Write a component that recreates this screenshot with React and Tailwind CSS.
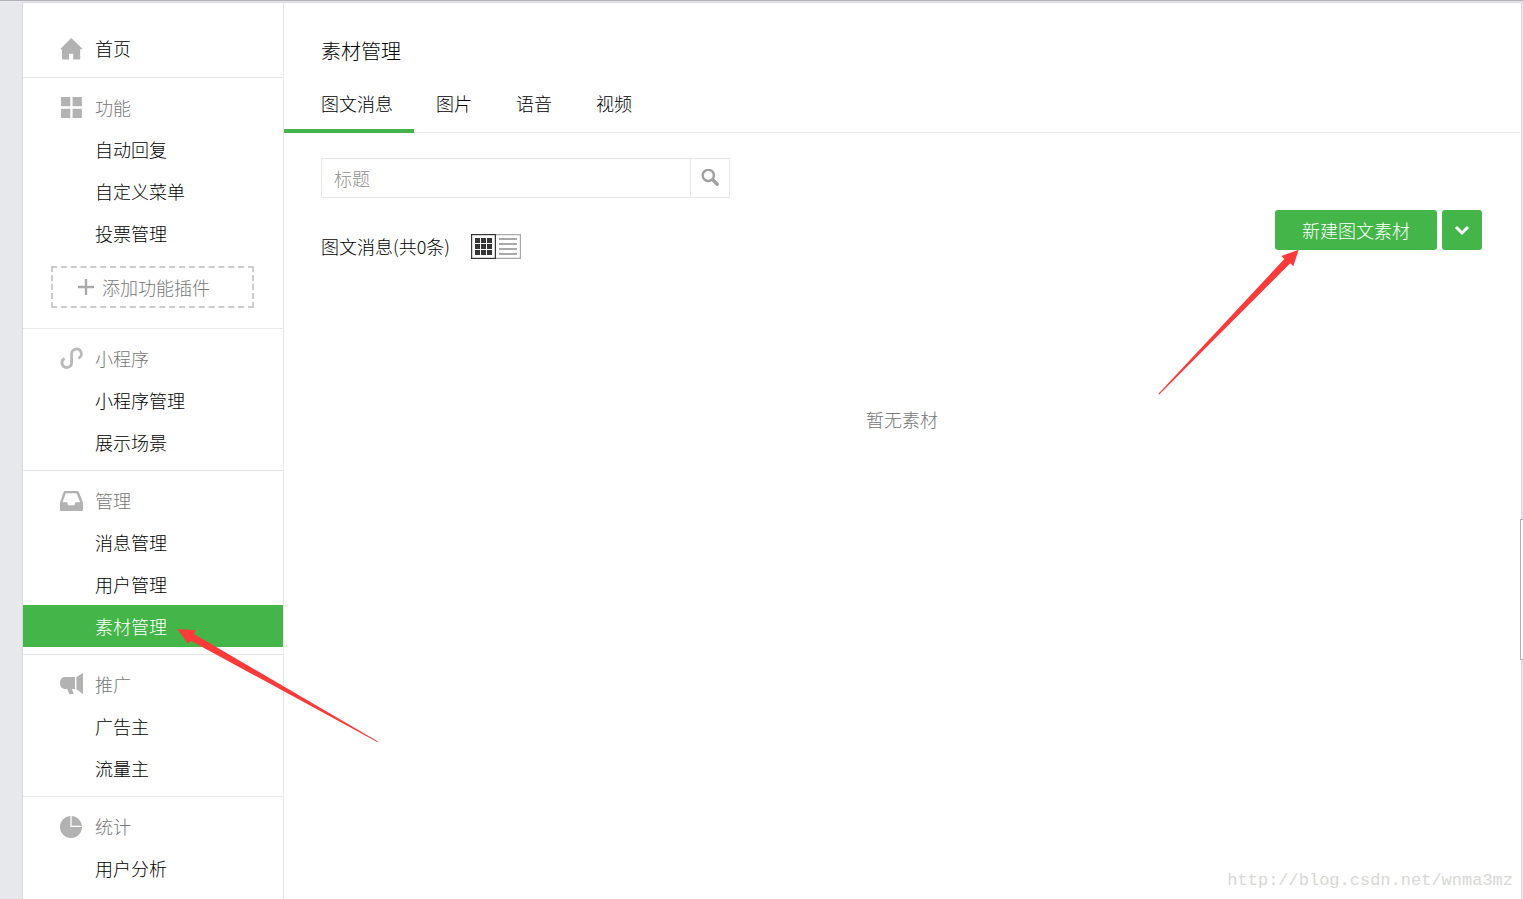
import React from 'react';
import clsx from 'clsx';

const HomeIcon = () => (
  <svg viewBox="0 0 24 24" className="w-6 h-6 fill-[#b2b2b2]" aria-hidden="true">
    <path d="M12.3 2 1 13.2h2V22.400q0 1 1 1h6v-5.600h4.200v5.600h6q1 0 1-1v-9.200h2.600z" />
  </svg>
);

const GridIcon = () => (
  <svg viewBox="0 0 24 24" className="w-6 h-6 fill-[#b2b2b2]" aria-hidden="true">
    <path d="M2 2h9.3v9.3H2zM13.6 2h9.3v9.3h-9.3zM2 13.7h9.3V23H2zM13.6 13.7h9.3V23h-9.3z" />
  </svg>
);

const MiniAppIcon = () => (
  <svg viewBox="0 0 24 24" className="w-6 h-6 fill-none stroke-[#b9b9b9]" strokeWidth="2.8" aria-hidden="true">
    <path d="M5.6 12.4A4.800 4.800 0 1 0 12.600 16.800V8A4.900 4.900 0 1 1 19.400 12.400" />
  </svg>
);

const TrayIcon = () => (
  <svg viewBox="0 0 24 24" className="w-6 h-6 fill-[#b2b2b2]" aria-hidden="true">
    <path
      fillRule="evenodd"
      d="M5.8 3h12.6q1 0 1.4 1L24 14.5V22q0 1-1 1H2q-1 0-1-1v-7.5L4.6 4Q5 3 5.8 3zM6.8 5.2 3.5 14.2H8.2Q8.6 17.3 10 17.3h4.500q1.500 0 1.900-3.100h4.800L17.500 5.200z"
    />
  </svg>
);

const HornIcon = () => (
  <svg viewBox="0 0 24 24" className="w-6 h-6 fill-[#b2b2b2]" aria-hidden="true">
    <path d="M6.5 5H16v12h-3.2l2 5h-4.6L8.200 17H6Q1 16.600 1 10.800 1.200 5 6.500 5zM17.400 5 24 1v21.200L17.400 17z" />
  </svg>
);

const PieIcon = () => (
  <svg viewBox="0 0 24 24" className="w-6 h-6" aria-hidden="true">
    <circle cx="12" cy="13" r="11" fill="#b2b2b2" />
    <path d="M12 1v11.400h12" fill="none" stroke="#fff" strokeWidth="1.3" />
  </svg>
);

const SearchIcon = () => (
  <svg viewBox="0 0 18 18" className="w-[18px] h-[18px] fill-none stroke-[#a0a0a0]" aria-hidden="true">
    <circle cx="7.3" cy="6.4" r="5.6" strokeWidth="2.4" />
    <path d="m11.800 10.800 4.400 4.400" strokeWidth="3.400" strokeLinecap="round" />
  </svg>
);

const sections = [
  {
    title: '功能',
    icon: GridIcon,
    items: ['自动回复', '自定义菜单', '投票管理'],
    addable: true,
  },
  { title: '小程序', icon: MiniAppIcon, items: ['小程序管理', '展示场景'] },
  { title: '管理', icon: TrayIcon, items: ['消息管理', '用户管理', '素材管理'] },
  { title: '推广', icon: HornIcon, items: ['广告主', '流量主'] },
  { title: '统计', icon: PieIcon, items: ['用户分析'] },
];

const tabs = ['图文消息', '图片', '语音', '视频'];

const Sidebar = ({ active }) => (
  <aside className="w-[261px] shrink-0 border-r border-[#e7e7eb]">
    <a href="#home" className="flex items-center gap-3 pl-9 pt-6 pb-2 leading-[42px]">
      <HomeIcon />
      首页
    </a>
    {sections.map(({ title, icon: Icon, items, addable }) => (
      <section key={title} className="border-t border-[#e7e7eb] pt-2 pb-[7px]">
        <h2 className="flex items-center gap-3 pl-9 leading-[42px] text-[#777777]">
          <Icon />
          {title}
        </h2>
        <ul>
          {items.map((item) => (
            <li key={item} className="relative">
              <a
                href={`#${item}`}
                className={clsx(
                  'block pl-[72px] leading-[42px]',
                  item === active && 'bg-[#44b549] text-white'
                )}
              >
                {item}
              </a>
              {item === active && (
                <svg
                  viewBox="0 0 202 115"
                  className="absolute left-[154px] top-[23px] z-10 w-[202px] h-[115px] fill-[#fb3b3a] pointer-events-none"
                  aria-hidden="true"
                >
                  <path d="M.3 1 19 2.3 17 6 201 113.500 200.600 114.200 13.700 12.700 11 15.700z" />
                </svg>
              )}
            </li>
          ))}
        </ul>
        {addable && (
          <button
            type="button"
            className="mx-7 mt-3 mb-[13px] flex h-[42px] w-[203px] items-center gap-2 border-2 border-dashed border-[#cccccc] pl-[25px] text-[#777777]"
          >
            <svg viewBox="0 0 16 16" className="w-4 h-4 stroke-[#aaaaaa]" strokeWidth="2.4" aria-hidden="true">
              <path d="M8 0v16M0 8h16" />
            </svg>
            添加功能插件
          </button>
        )}
      </section>
    ))}
  </aside>
);

const Tabs = ({ active }) => (
  <nav className="mt-3 border-b border-[#e7e7eb]">
    <ul className="-mb-px flex">
      {tabs.map((tab) => (
        <li key={tab} className="group">
          <a
            href={`#${tab}`}
            className={clsx(
              'block border-b-4 px-[22px] py-0.5 leading-12 group-first:pl-[37px] group-first:pr-[21px]',
              tab === active ? 'border-[#44b549]' : 'border-transparent'
            )}
          >
            {tab}
          </a>
        </li>
      ))}
    </ul>
  </nav>
);

const SearchBox = () => (
  <form className="flex h-10 w-[409px] border border-[#e7e7eb]" role="search">
    <input
      type="text"
      aria-label="标题"
      placeholder="标题"
      className="min-w-0 flex-1 px-3 outline-none placeholder:text-[#8f8f8f]"
    />
    <button
      type="button"
      aria-label="搜索"
      className="flex w-[39px] items-center justify-center border-l border-[#e7e7eb]"
    >
      <SearchIcon />
    </button>
  </form>
);

const ViewToggle = () => (
  <div className="flex">
    <button type="button" aria-label="卡片视图">
      <svg viewBox="0 0 25 25" className="w-[25px] h-[25px]" aria-hidden="true">
        <rect x=".6" y=".6" width="23.8" height="23.8" fill="#fff" stroke="#353535" strokeWidth="1.2" />
        <path
          d="M4 4h5v5H4zM10 4h5v5h-5zM16 4h5v5h-5zM4 10h5v5H4zM10 10h5v5h-5zM16 10h5v5h-5zM4 16h5v5H4zM10 16h5v5h-5zM16 16h5v5h-5z"
          fill="#353535"
        />
      </svg>
    </button>
    <button type="button" aria-label="列表视图">
      <svg viewBox="0 0 25 25" className="w-[25px] h-[25px]" aria-hidden="true">
        <path d="M0 .6h24.400v23.800H0" fill="#fff" stroke="#a9a9a9" strokeWidth="1.2" />
        <path d="M3 5h18M3 10h18M3 15h18M3 20h18" stroke="#a9a9a9" strokeWidth="2" />
      </svg>
    </button>
  </div>
);

const CreateActions = () => (
  <div className="relative flex gap-[5px] text-white">
    <button type="button" className="h-10 w-[162px] rounded-[3px] bg-[#44b549]">
      新建图文素材
    </button>
    <button
      type="button"
      aria-label="更多"
      className="flex h-10 w-10 items-center justify-center rounded-[3px] bg-[#44b549]"
    >
      <svg viewBox="0 0 16 12" className="w-4 h-3 fill-none stroke-white" strokeWidth="3" aria-hidden="true">
        <path d="m2 3 6 6 6-6" />
      </svg>
    </button>
    <svg
      viewBox="0 0 142 146"
      className="absolute right-[182px] top-[39px] w-[142px] h-[146px] fill-[#fb3b3a] pointer-events-none"
      aria-hidden="true"
    >
      <path d="M140.7.7 123.3 7l3 3L.2 145l.8.7L132.3 14.3l3 3z" />
    </svg>
  </div>
);

const App = () => (
  <div className="relative flex min-h-screen flex-col overflow-hidden border-t border-[#b4b1b6] bg-[#e7e8ec] pl-[22px] pr-px font-['Noto_Sans_CJK_SC',sans-serif] text-[18px] font-light text-black">
    <div className="mt-px flex flex-1 border border-b-0 border-[#d9dadc] bg-white">
      <Sidebar active="素材管理" />
      <main className="flex-1 pr-px">
        <h1 className="pl-[37px] pt-[34px] text-xl font-light leading-7">素材管理</h1>
        <Tabs active="图文消息" />
        <div className="pl-[37px] pr-[38px] pt-[25px]">
          <SearchBox />
          <div className="mt-3 flex items-start justify-between">
            <div className="mt-6 flex items-center gap-[21px] leading-[23px]">
              <p>图文消息(共0条)</p>
              <ViewToggle />
            </div>
            <CreateActions />
          </div>
        </div>
        <p className="mt-[148px] text-center leading-6 text-[#777777]">暂无素材</p>
      </main>
    </div>
    <div className="absolute -right-1 top-[518px] h-[141px] w-[7px] border border-[#b0b0b0] bg-white" />
    <p className="absolute bottom-1.5 right-[10px] font-['Liberation_Mono',monospace] text-[17px] leading-6 text-[#d8d8d5]">
      http://blog.csdn.net/wnma3mz
    </p>
  </div>
);

export default App;
